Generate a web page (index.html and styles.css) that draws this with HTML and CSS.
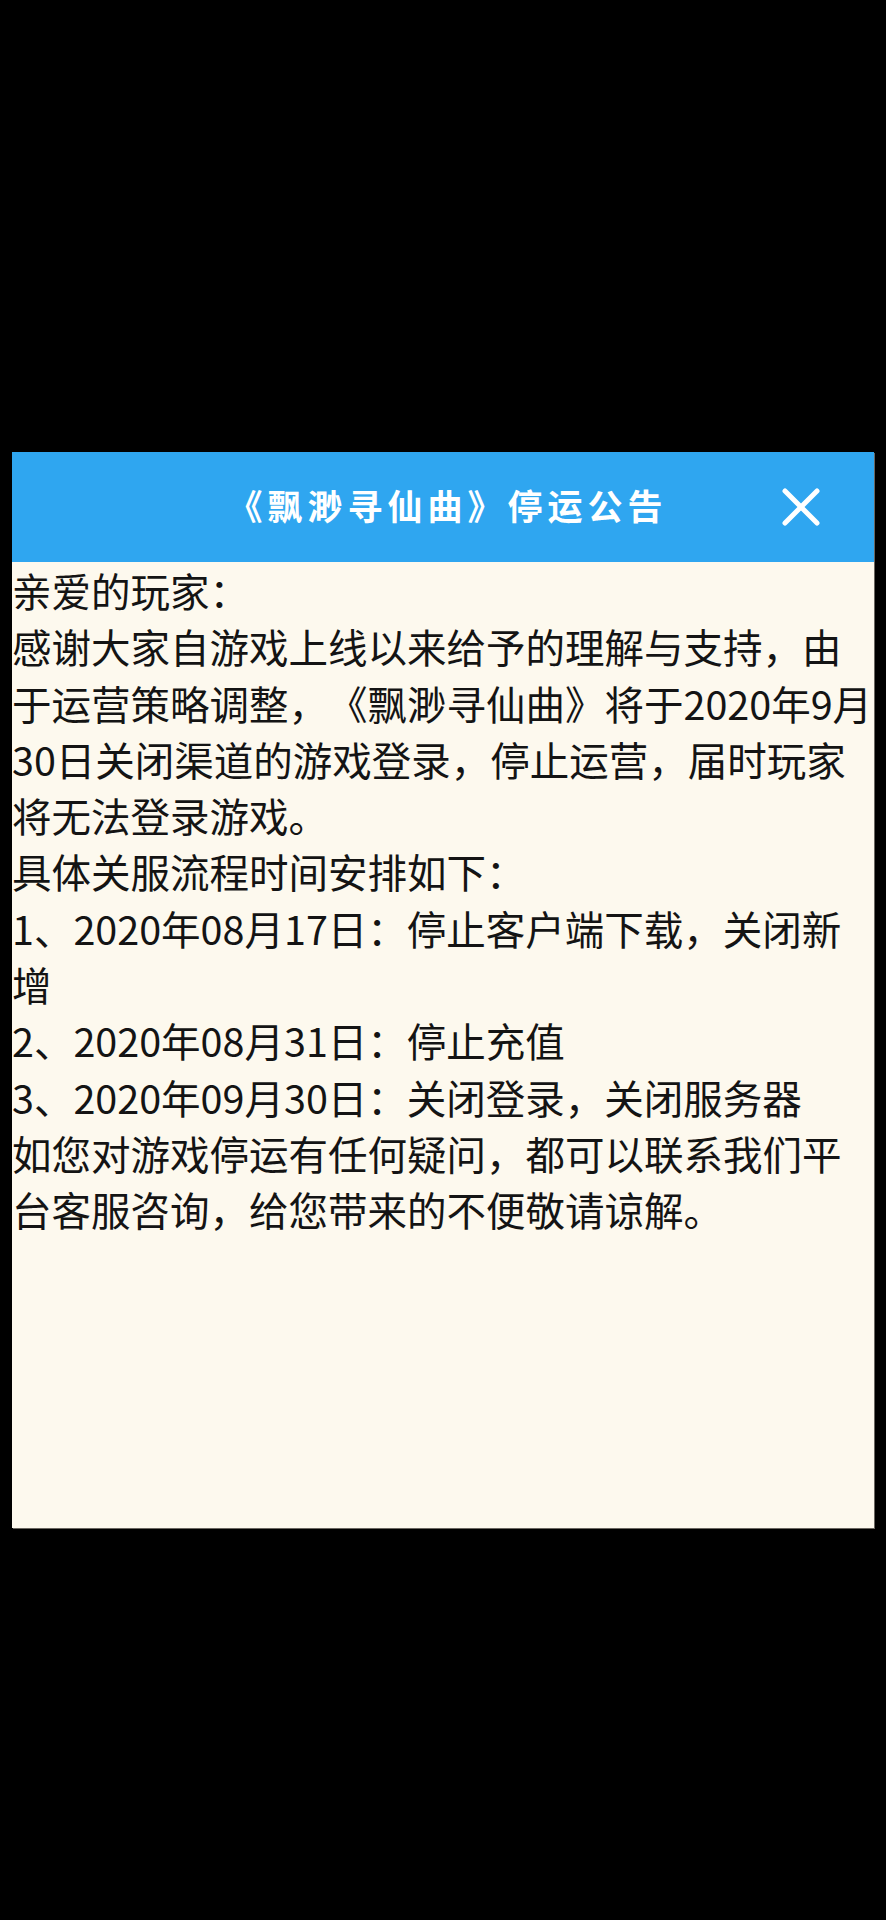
FILE: index.html
```html
<!DOCTYPE html>
<html lang="zh-CN">
<head>
<meta charset="utf-8">
<title>停运公告</title>
<link rel="stylesheet" href="styles.css">
</head>
<body>
<div class="screen">
  <div class="dialog">
    <div class="header">
      <div class="title">《飘渺寻仙曲》停运公告</div>
      <div class="close" aria-label="关闭">
        <svg width="38" height="38" viewBox="0 0 38 38"><path d="M3 3 L35 35 M35 3 L3 35" stroke="#fff" stroke-width="5" stroke-linecap="round"/></svg>
      </div>
    </div>
    <div class="content">
      <p>亲爱的玩家：</p>
      <p>感谢大家自游戏上线以来给予的理解与支持，由于运营策略调整，《飘渺寻仙曲》将于2020年9月30日关闭渠道的游戏登录，停止运营，届时玩家将无法登录游戏。</p>
      <p>具体关服流程时间安排如下：</p>
      <p>1、2020年08月17日：停止客户端下载，关闭新增</p>
      <p>2、2020年08月31日：停止充值</p>
      <p>3、2020年09月30日：关闭登录，关闭服务器</p>
      <p>如您对游戏停运有任何疑问，都可以联系我们平台客服咨询，给您带来的不便敬请谅解。</p>
    </div>
  </div>
</div>
</body>
</html>
```
FILE: styles.css
```css
html, body {
  margin: 0;
  padding: 0;
  background: #000;
}
.screen {
  width: 886px;
  height: 1920px;
  background: #000;
  padding: 452px 12px 0 12px;
  box-sizing: border-box;
}
.dialog {
  width: 862px;
  height: 1076px;
  background: #fdf9ee;
  display: flex;
  flex-direction: column;
  box-shadow: 1px 1px 0 #6a6660;
}
.header {
  height: 110px;
  background: #2fa6f0;
  position: relative;
  display: flex;
  align-items: center;
  justify-content: center;
}
.title {
  font-family: "Noto Sans CJK SC", "Noto Sans CJK JP", sans-serif;
  font-weight: 700;
  font-size: 35px;
  letter-spacing: 5px;
  color: #fff;
  margin-left: 9px;
  margin-top: -6px;
  text-spacing-trim: space-all;
}
.close {
  position: absolute;
  right: 54px;
  top: 36px;
  width: 38px;
  height: 38px;
}
.close svg { display: block; }
.content {
  font-family: "Noto Sans CJK SC", "Noto Sans CJK JP", sans-serif;
  font-size: 39.5px;
  line-height: 56.3px;
  color: #141414;
  padding: 0;
  text-spacing-trim: space-all;
}
.content p {
  margin: 0;
}
```
